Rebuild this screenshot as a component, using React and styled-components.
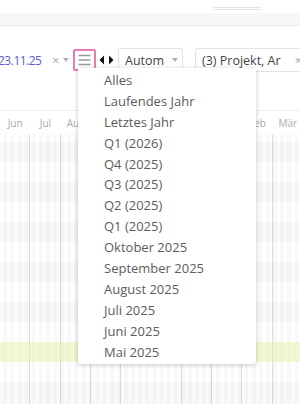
import React from 'react'
import styled, { createGlobalStyle } from 'styled-components'

const GlobalStyle = createGlobalStyle`
  html, body {
    margin: 0;
    padding: 0;
    background: #fff;
  }
  body {
    font-family: "Open Sans", "DejaVu Sans", sans-serif;
  }
`

const months = ['Jun', 'Jul', 'Aug', 'Sep', 'Okt', 'Nov', 'Dez', 'Jan', 'Feb', 'Mär']

const ranges = [
  'Alles',
  'Laufendes Jahr',
  'Letztes Jahr',
  'Q1 (2026)',
  'Q4 (2025)',
  'Q3 (2025)',
  'Q2 (2025)',
  'Q1 (2025)',
  'Oktober 2025',
  'September 2025',
  'August 2025',
  'Juli 2025',
  'Juni 2025',
  'Mai 2025',
]

// tone per gantt row: first row is cut by the header
const rows = [
  { h: 8, tone: 'white' },
  { h: 20, tone: 'gray' },
  { h: 20, tone: 'white' },
  { h: 20, tone: 'gray' },
  { h: 20, tone: 'white' },
  { h: 20, tone: 'gray' },
  { h: 20, tone: 'white' },
  { h: 20, tone: 'gray' },
  { h: 20, tone: 'white' },
  { h: 20, tone: 'gray' },
  { h: 20, tone: 'white' },
  { h: 20, tone: 'yellow' },
  { h: 20, tone: 'white' },
  { h: 22, tone: 'gray' },
]

const App = () => {
  return (
    <Page>
      <GlobalStyle />
      <TopStrip>
        <Handle />
      </TopStrip>
      <TabBand />

      <Toolbar>
        <DateField>
          <DateText>23.11.25</DateText>
          <Clear>×</Clear>
          <Caret />
        </DateField>
        <RangeButton>
          <svg width="13" height="12" viewBox="0 0 13 12">
            <path d="M0.5 1.5h12M0.5 6h12M0.5 10.5h12" stroke="#9a9a9a" strokeWidth="1.3" />
          </svg>
        </RangeButton>
        <Arrows>
          <svg width="15" height="10" viewBox="0 0 15 10">
            <path d="M5 0.5L0.5 5L5 9.5Z" fill="#111" />
            <path d="M10 0.5L14.5 5L10 9.5Z" fill="#111" />
          </svg>
        </Arrows>
        <Select $width={65} $gap={2}>
          <SelectText>Autom</SelectText>
          <Caret />
        </Select>
        <Select $width={112} $gap={12}>
          <SelectText>(3) Projekt, Ar</SelectText>
          <Clear>×</Clear>
        </Select>
      </Toolbar>

      <Timeline>
        <MonthHeader>
          {months.map((m) => (
            <Month key={m}>{m}</Month>
          ))}
        </MonthHeader>
        <Grid>
          {rows.map((r, i) => (
            <Row key={i} $tone={r.tone} style={{ height: r.h }} />
          ))}
        </Grid>
      </Timeline>

      <Menu>
        {ranges.map((r) => (
          <MenuItem key={r}>{r}</MenuItem>
        ))}
      </Menu>
    </Page>
  )
}

export default App

const Page = styled.div`
  position: relative;
  width: 300px;
  height: 404px;
  overflow: hidden;
  background: #fff;
`

const TopStrip = styled.div`
  height: 13px;
  display: flex;
  justify-content: flex-end;
  padding-right: 39px;
  align-items: flex-start;
`

const Handle = styled.div`
  margin-top: 7px;
  width: 48px;
  height: 1px;
  border-top: 1px solid #e2e2e2;
  border-bottom: 1px solid #e2e2e2;
`

const TabBand = styled.div`
  height: 12px;
  background: #f7f7f7;
  border-bottom: 1px solid #e8e8e8;
`

const Toolbar = styled.div`
  display: flex;
  align-items: center;
  height: 24px;
  margin-top: 22px;
  white-space: nowrap;
`

const DateField = styled.div`
  display: flex;
  align-items: center;
  width: 73px;
  flex: none;
`

const DateText = styled.span`
  font-size: 12px;
  letter-spacing: -0.5px;
  color: #5a5ad2;
  margin-left: -2px;
  width: 52px;
`

const Clear = styled.span`
  font-size: 13px;
  color: #a8a8a8;
  line-height: 1;
  margin-left: 2px;
`

const Caret = styled.span`
  flex: none;
  width: 0;
  height: 0;
  margin-left: 4px;
  border-left: 3.5px solid transparent;
  border-right: 3.5px solid transparent;
  border-top: 4px solid #b0b0b0;
`

const RangeButton = styled.div`
  width: 19px;
  height: 18px;
  border: 2px solid #e87bb0;
  border-radius: 2px;
  display: flex;
  align-items: center;
  justify-content: center;
  flex: none;
`

const Arrows = styled.div`
  display: flex;
  align-items: center;
  margin-left: 3px;
  width: 17px;
  flex: none;
`

const Select = styled.div`
  display: flex;
  align-items: center;
  box-sizing: border-box;
  width: ${(p) => p.$width}px;
  height: 24px;
  padding: 0 4px 0 6px;
  margin-left: ${(p) => p.$gap}px;
  border: 1px solid #e3e3e3;
  border-radius: 3px;
  overflow: hidden;
  flex: none;
`

const SelectText = styled.span`
  font-size: 12.5px;
  color: #444;
  flex: 1;
  overflow: hidden;
`

const Timeline = styled.div`
  margin-top: 38px;
`

const MonthHeader = styled.div`
  display: flex;
  height: 23px;
  align-items: center;
  border-top: 1px solid #efefef;
`

const Month = styled.div`
  width: 30.3px;
  flex: none;
  text-align: center;
  font-size: 10px;
  color: #ababab;
`

const Grid = styled.div`
  background-image:
    repeating-linear-gradient(90deg, transparent 0 29.3px, #dcdcdc 29.3px 30.3px),
    repeating-linear-gradient(90deg, transparent 0 3.5px, rgba(0,0,0,0.025) 3.5px 7.1px);
`

const Row = styled.div`
  background: ${(p) =>
    p.$tone === 'yellow' ? 'rgba(228,238,160,0.45)' : p.$tone === 'gray' ? 'rgba(0,0,0,0.022)' : 'transparent'};
`

const Menu = styled.ul`
  position: absolute;
  top: 68px;
  left: 78px;
  width: 178px;
  margin: 0;
  padding: 2px 0;
  list-style: none;
  background: #fff;
  border-radius: 0 0 3px 3px;
  box-shadow: 0 1px 5px rgba(0, 0, 0, 0.22);
`

const MenuItem = styled.li`
  height: 20.9px;
  line-height: 20.9px;
  padding-left: 26px;
  font-size: 13px;
  color: #5c5c5c;
`
